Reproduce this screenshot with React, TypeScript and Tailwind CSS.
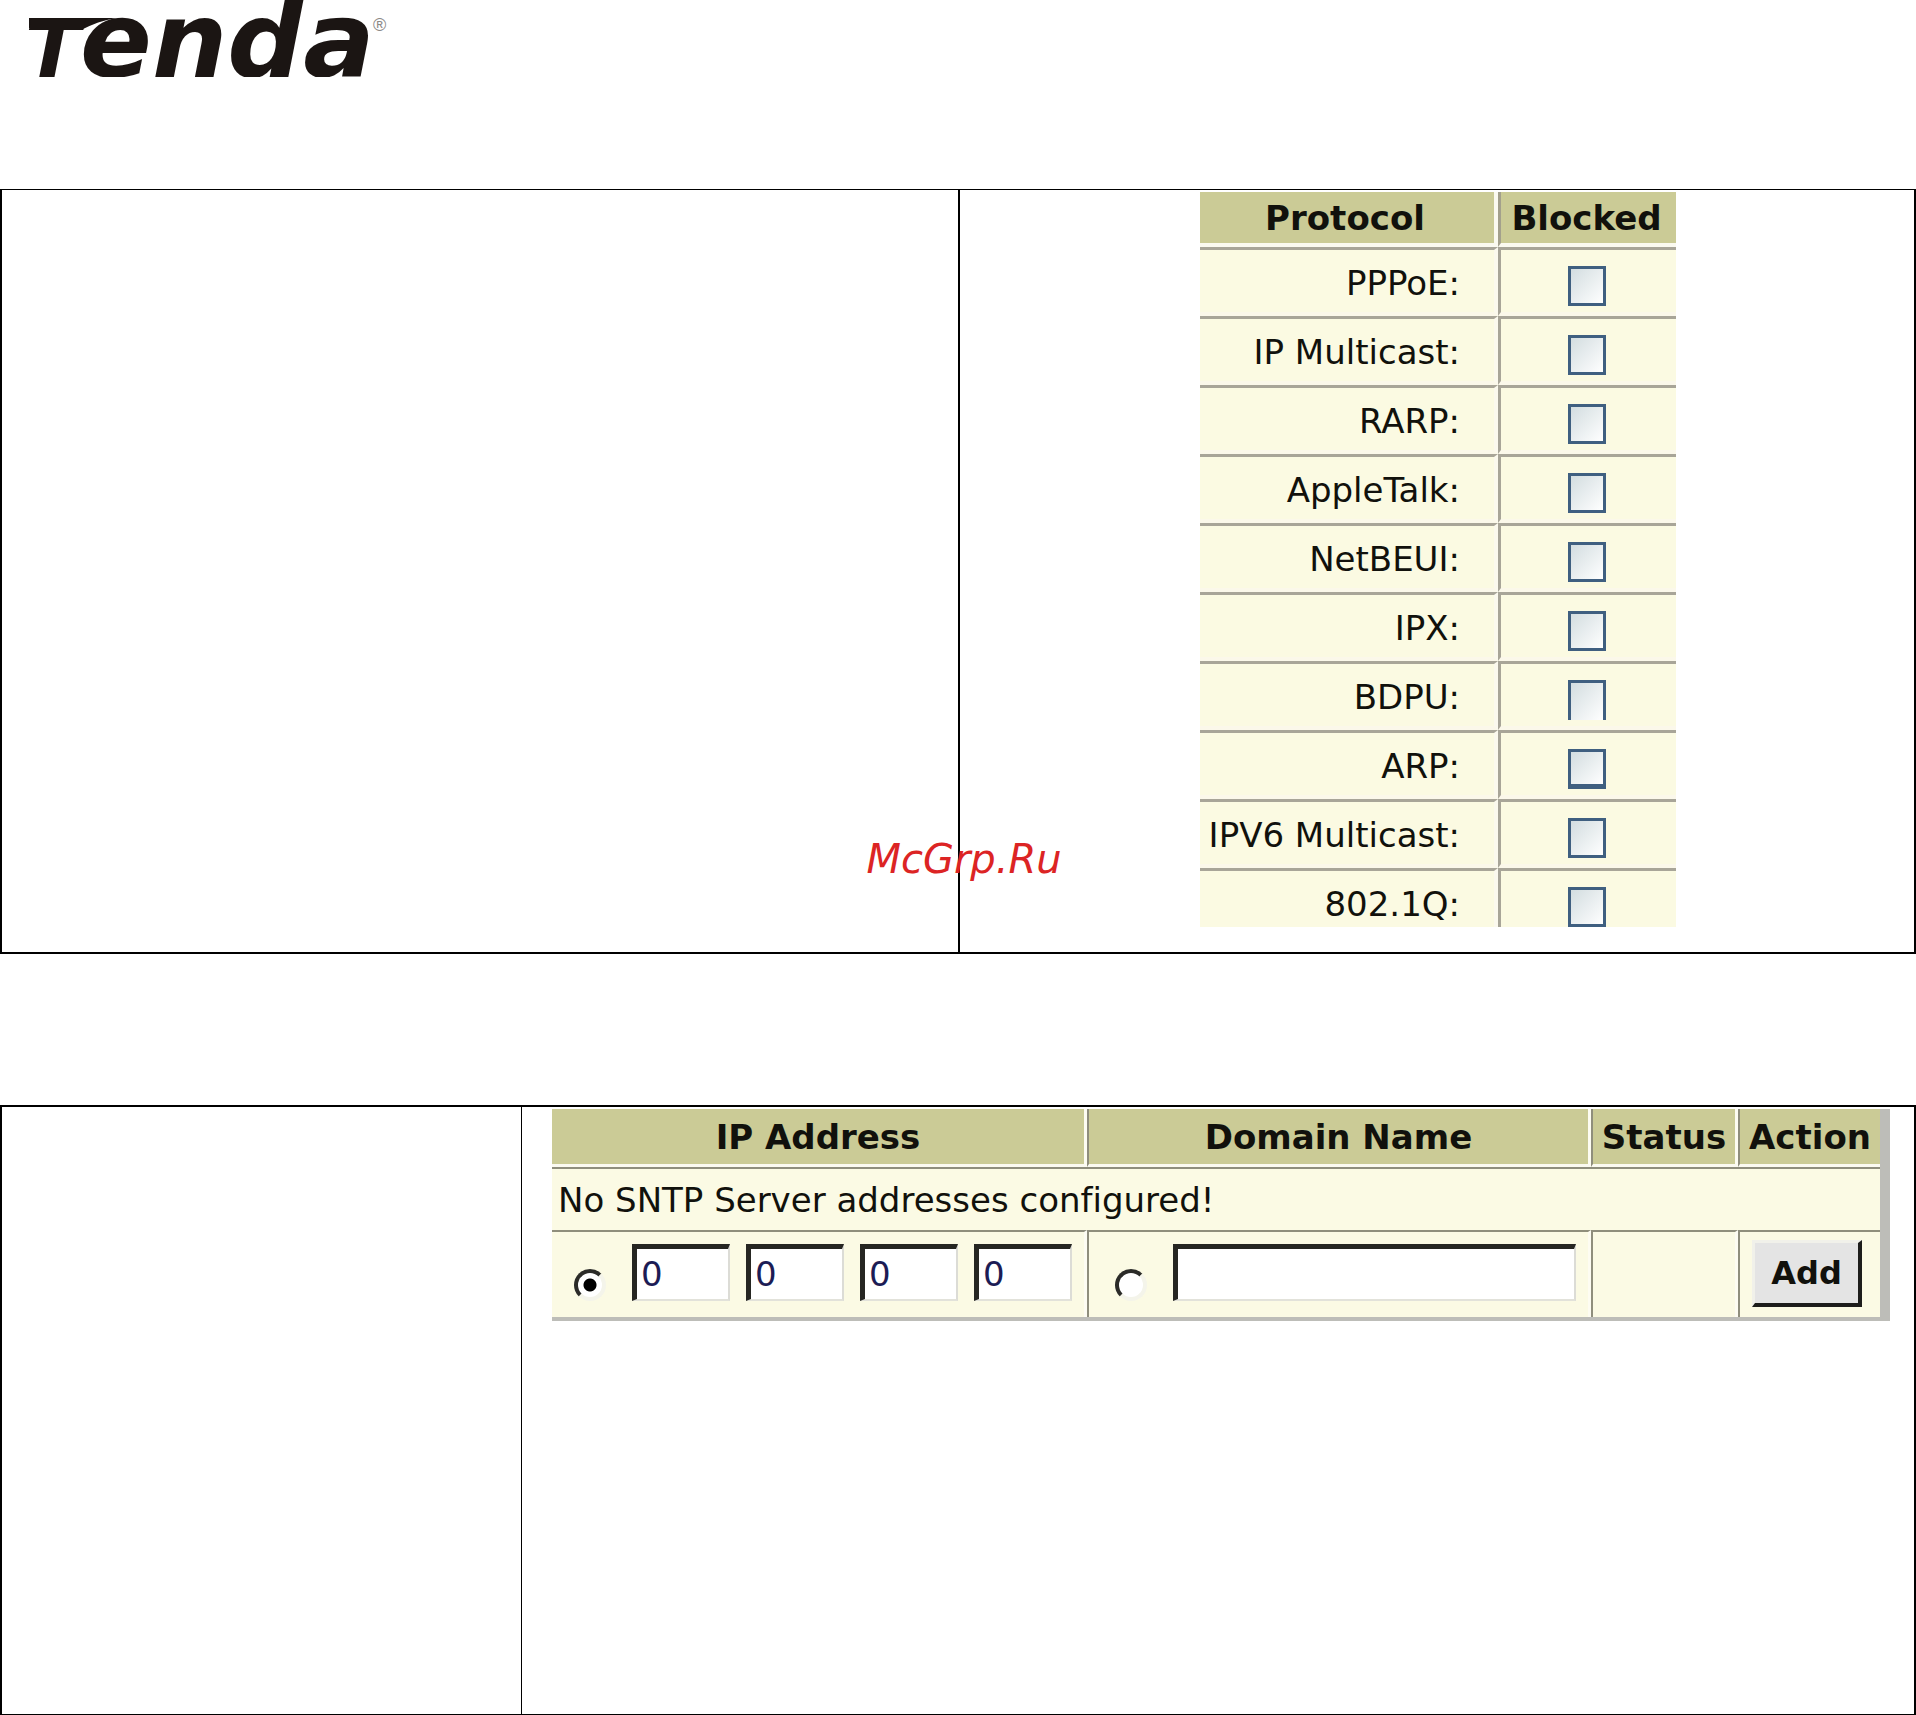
import { useState } from "react";

interface Protocol {
    name: string;
    box?: string;
}

const protocols: Protocol[] = [
    { name: "PPPoE" },
    { name: "IP Multicast" },
    { name: "RARP" },
    { name: "AppleTalk" },
    { name: "NetBEUI" },
    { name: "IPX" },
    { name: "BDPU", box: "border-b-0" },
    { name: "ARP", box: "border-b-[5px]" },
    { name: "IPV6 Multicast" },
    { name: "802.1Q" },
];

const inset =
    "h-[57px] border-t-[5px] border-l-[5px] border-r-2 border-b-2 border-t-[#262622] border-l-[#262622] border-r-[#dcdcd6] border-b-[#e2e2da] bg-white text-[34px] text-[#1c1c55] outline-none";

const radio =
    "h-8 w-8 shrink-0 appearance-none rounded-full border-[4px] border-t-[#2b2b28] border-l-[#2b2b28] border-r-[#f4f4ea] border-b-[#f4f4ea] bg-white checked:bg-[radial-gradient(circle_at_center,#000_6px,transparent_7px)]";

function Logo() {
    return (
        <svg className="ml-7 block h-[77px] w-[364px]" viewBox="28 0 364 77" role="img" aria-label="Tenda">
            <path d="M29 18H116C104 20 92 24 81 30L29 28Z" fill="#1b1513" />
            <text y="77" fill="#1b1513" fontFamily="DejaVu Sans" fontWeight="700" fontStyle="italic">
                <tspan x="25" fontSize="81">T</tspan>
                <tspan x="80" fontSize="106">enda</tspan>
            </text>
            <text x="373" y="31" fontSize="18" fill="#8b8886" fontFamily="Liberation Sans">®</text>
        </svg>
    );
}

function ProtocolTable() {
    const [blocked, setBlocked] = useState<string[]>([]);

    const toggle = (name: string) =>
        setBlocked((prev) => (prev.includes(name) ? prev.filter((n) => n !== name) : [...prev, name]));

    return (
        <div className="h-[735px] w-[476px] overflow-hidden">
            <table className="w-full table-fixed border-separate border-spacing-0 text-[34px] leading-10 text-[#11110c]">
                <colgroup>
                    <col className="w-[298px]" />
                    <col />
                </colgroup>
                <thead>
                    <tr className="h-[55px] bg-[#cbcb96]">
                        <th className="border-r-4 border-b-4 border-[#fbfaf0] p-0 pr-1">Protocol</th>
                        <th className="border-b-4 border-l-3 border-b-[#fbfaf0] border-l-[#a3a08c] p-0 pr-1">Blocked</th>
                    </tr>
                </thead>
                <tbody>
                    {protocols.map(({ name, box }) => (
                        <tr key={name} className="h-[69px] bg-[#fbfae2]">
                            <td className="border-t-3 border-r-4 border-b-4 border-t-[#a8a598] border-r-[#fbf9ee] border-b-[#fbf8ea] p-0 pt-1 pr-[34px] text-right whitespace-nowrap">
                                <label htmlFor={name}>{name}:</label>
                            </td>
                            <td className="border-t-3 border-b-4 border-l-3 border-t-[#a8a598] border-b-[#fbf8ea] border-l-[#a8a598] p-0 pt-2.5 pr-1">
                                <input
                                    id={name}
                                    type="checkbox"
                                    checked={blocked.includes(name)}
                                    onChange={() => toggle(name)}
                                    className={`mx-auto block h-10 w-[38px] appearance-none border-3 border-[#3f5f80] bg-linear-to-br from-[#d3dde0] to-white checked:bg-[#3f5f80] ${box ?? ""}`}
                                />
                            </td>
                        </tr>
                    ))}
                </tbody>
            </table>
        </div>
    );
}

function SntpTable() {
    const [source, setSource] = useState("ip");
    const [octets, setOctets] = useState(["0", "0", "0", "0"]);

    const head = "border-b-3 border-b-[#fbfaf0] p-0";
    const cell = "border-t-2 border-t-[#8f8e7c] p-0 align-top";
    const split = "border-l-2 border-l-[#8f8e7c]";
    const gap = "border-r-3 border-r-[#fdfcf2]";

    return (
        <div className="border-r-10 border-b-4 border-[#bdbdb8]">
            <table className="w-full table-fixed border-separate border-spacing-0 text-[34px] leading-10 text-[#11110c]">
                <colgroup>
                    <col />
                    <col className="w-[504px]" />
                    <col className="w-[147px]" />
                    <col className="w-[142px]" />
                </colgroup>
                <thead>
                    <tr className="h-[58px] bg-[#cbcb96]">
                        <th className={`${head} ${gap}`}>IP Address</th>
                        <th className={`${head} ${split} ${gap}`}>Domain Name</th>
                        <th className={`${head} ${split} ${gap}`}>Status</th>
                        <th className={`${head} ${split}`}>Action</th>
                    </tr>
                </thead>
                <tbody className="bg-[#fbfae4]">
                    <tr className="h-[63px]">
                        <td
                            colSpan={4}
                            className="border-t-2 border-t-[#8f8e7c] p-0 pl-1.5 [font-variant-ligatures:none]"
                        >
                            No SNTP Server addresses configured!
                        </td>
                    </tr>
                    <tr className="h-[87px]">
                        <td className={`${cell} ${gap}`}>
                            <div className="flex items-end pt-3 pl-[22px]">
                                <input
                                    type="radio"
                                    name="source"
                                    aria-label="IP Address"
                                    checked={source === "ip"}
                                    onChange={() => setSource("ip")}
                                    className={radio}
                                />
                                <div className="ml-[26px] flex gap-4">
                                    {octets.map((value, i) => (
                                        <input
                                            key={i}
                                            type="text"
                                            aria-label={`Octet ${i + 1}`}
                                            value={value}
                                            onChange={(e) => setOctets(octets.map((o, j) => (j === i ? e.target.value : o)))}
                                            className={`${inset} w-[98px] px-1`}
                                        />
                                    ))}
                                </div>
                            </div>
                        </td>
                        <td className={`${cell} ${split} ${gap}`}>
                            <div className="flex items-end pt-3 pr-3 pl-[26px]">
                                <input
                                    type="radio"
                                    name="source"
                                    aria-label="Domain Name"
                                    checked={source === "domain"}
                                    onChange={() => setSource("domain")}
                                    className={radio}
                                />
                                <input type="text" aria-label="Domain" className={`${inset} ml-[26px] min-w-0 flex-1 px-1`} />
                            </div>
                        </td>
                        <td className={`${cell} ${split} ${gap}`} />
                        <td className={`${cell} ${split}`}>
                            <button
                                type="button"
                                className="mt-2 ml-3 block h-[67px] w-[110px] border-t-3 border-r-4 border-b-4 border-l-3 border-t-[#f1f1ea] border-r-[#1d1d1b] border-b-[#1d1d1b] border-l-[#f1f1ea] bg-[#e4e4e4] text-[32px] font-bold"
                            >
                                Add
                            </button>
                        </td>
                    </tr>
                </tbody>
            </table>
        </div>
    );
}

export default function App() {
    return (
        <main className="bg-white font-['DejaVu_Sans',sans-serif]">
            <header className="pb-28">
                <Logo />
            </header>

            <section className="relative grid grid-cols-2 border-x-2 border-t border-b-2 border-black">
                <div />
                <div className="flex justify-center border-l-2 border-black pt-0.5 pb-[25px] pl-0.5">
                    <ProtocolTable />
                </div>
                <span className="absolute inset-x-0 bottom-[69px] pl-3 text-center text-[40px] leading-[48px] text-[#dc2424] italic">
                    McGrp.Ru
                </span>
            </section>

            <section className="mt-[151px] grid min-h-[610px] grid-cols-[520px_1fr] border-x-2 border-t-2 border-b border-black">
                <div className="border-r border-black" />
                <div className="pt-0.5 pr-6 pl-[30px]">
                    <SntpTable />
                </div>
            </section>
        </main>
    );
}
